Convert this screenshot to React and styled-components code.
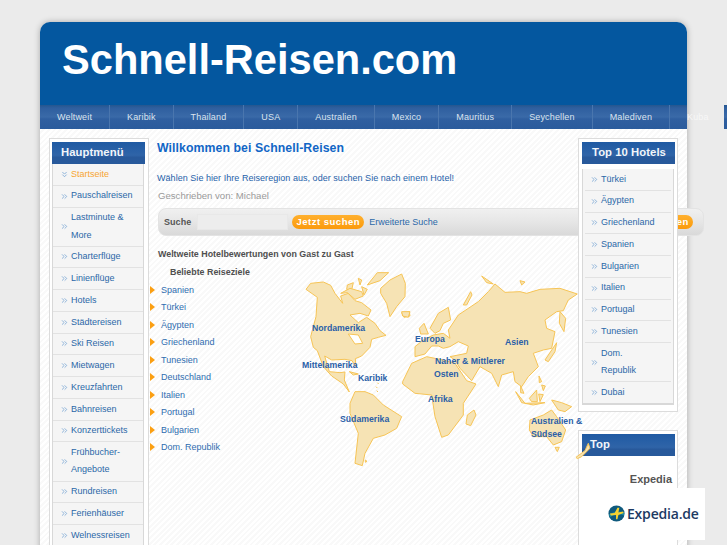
import React from 'react';
import styled, { createGlobalStyle } from 'styled-components';
import { ChevronsRight, ChevronsDown } from 'lucide-react';

const GlobalStyle = createGlobalStyle`
  html, body {
    margin: 0;
    overflow-x: hidden;
    background: #ebebeb;
    font-family: "Liberation Sans", Arial, sans-serif;
  }
`;

const Wrapper = styled.div`
  width: 647px;
  margin: 22px auto 0;
  border-radius: 10px 10px 0 0;
  box-shadow: 0 0 6px rgba(0, 0, 0, 0.28);
`;

const Header = styled.header`
  height: 83px;
  box-sizing: border-box;
  padding: 13px 0 0 22px;
  background: #04579f;
  border-radius: 10px 10px 0 0;
`;

const Logo = styled.h1`
  margin: 0;
  color: #fff;
  font-size: 41.6px;
  line-height: 50px;
  font-weight: 700;
  white-space: nowrap;
`;

const navBg = `linear-gradient(#24568f 0, #2f5f9f 3px, #3a6aa8 12px, #2f5fa0 14px, #2a5b9c 100%)`;

const Nav = styled.nav`
  display: flex;
  height: 24px;
  background: ${navBg};
`;

const NavItem = styled.a`
  flex: none;
  padding: 0 ${(p) => p.$right || 17}px 0 17px;
  border-right: ${(p) => (p.$last ? 'none' : '1px solid #4a76ae')};
  color: ${(p) => (p.$last ? '#f7f7f7' : '#dbe4ef')};
  font-size: 9px;
  line-height: 25px;
  letter-spacing: 0.15px;
`;

const NextBlock = styled.div`
  flex: none;
  width: 30px;
  background: ${navBg};
`;

const Content = styled.div`
  display: flex;
  align-items: flex-start;
  height: 440px;
  box-sizing: border-box;
  padding: 9px 9px 0;
  background: repeating-linear-gradient(135deg, #fff 0 2px, #f9f9f9 2px 4px);
`;

const SideBox = styled.aside`
  flex: none;
  position: relative;
  width: 100px;
  box-sizing: border-box;
  padding: 3px 2px ${(p) => p.$bottom || 4}px ${(p) => p.$left || 2}px;
  background: #fff;
  border: 1px solid #dcdcdc;
  z-index: 2;
`;

const RightColumn = styled.div`
  flex: none;
  display: flex;
  flex-direction: column;
  gap: 18px;
  margin-left: auto;
  position: relative;
  z-index: 2;
`;

const BoxTitle = styled.h3`
  margin: 0 0 ${(p) => p.$gap || 0}px;
  height: 22px;
  width: 93px;
  box-sizing: border-box;
  padding-left: ${(p) => p.$indent || 9}px;
  background: linear-gradient(#1f5aa3 0, #2f64a8 60%, #28599b 70%, #27599b 100%);
  color: #f2f5f9;
  font-size: 11.3px;
  line-height: 21px;
  font-weight: 700;
  letter-spacing: 0.05px;
  text-align: ${(p) => p.$align || 'left'};
  white-space: nowrap;
`;

const MenuList = styled.ul`
  margin: 0;
  padding: 0 ${(p) => p.$pad || 0}px;
  width: ${(p) => p.$width}px;
  box-sizing: border-box;
  list-style: none;
  background: #f5f5f5;
  border: 1px solid #d8d8d8;
  border-width: 0 1px 2px;
`;

const MenuItem = styled.li`
  display: flex;
  align-items: center;
  box-sizing: border-box;
  padding: 1.6px ${(p) => p.$right}px 1.75px ${(p) => p.$left}px;
  border-bottom: 1px solid #e2e2e2;
  color: ${(p) => (p.$active ? '#f7a531' : '#2b68a8')};
  font-size: 9px;
  line-height: 17.4px;

  &:last-child {
    border-bottom: none;
  }

  svg {
    flex: none;
    margin-right: 2px;
    color: #6d9fd0;
  }
`;

const Main = styled.main`
  flex: 1;
  min-width: 0;
  margin-left: 8px;
  position: relative;
`;

const Heading = styled.h2`
  margin: 2px 0 0;
  color: #1166c6;
  font-size: 12.3px;
  line-height: 16px;
  font-weight: 700;
  letter-spacing: 0.07px;
  white-space: nowrap;
`;

const Intro = styled.p`
  margin: 16px 0 0;
  color: #1f62aa;
  font-size: 9px;
  line-height: 12px;
  letter-spacing: 0.04px;
  white-space: nowrap;
`;

const Byline = styled.p`
  margin: 6px 0 0 1px;
  color: #9a9a9a;
  font-size: 9.6px;
  line-height: 12px;
`;

const SearchBar = styled.div`
  display: flex;
  align-items: center;
  width: 546px;
  height: 28px;
  box-sizing: border-box;
  margin: 6px 0 0 1px;
  padding: 0 10px 0 5px;
  border: 1px solid #e3e3e3;
  border-radius: 8px;
  background: linear-gradient(#f0f0f0, #e6e6e6 50%, #d9d9d9);
`;

const SearchLabel = styled.span`
  color: #555;
  font-size: 9px;
  font-weight: 700;
  letter-spacing: 0.05px;
`;

const SearchInput = styled.div`
  width: 89px;
  height: 14px;
  margin: 0 4px 0 6px;
  border: 1px solid #e8e8e8;
  background: #ededed;
`;

const SearchButton = styled.span`
  flex: none;
  width: 72px;
  height: 14px;
  margin-left: ${(p) => (p.$end ? 'auto' : '0')};
  border-radius: 7px;
  background: linear-gradient(#ffb02e, #fb9a0c);
  color: #fff;
  font-size: 9.5px;
  line-height: 14px;
  font-weight: 700;
  letter-spacing: 0.5px;
  text-align: center;
  white-space: nowrap;
`;

const SearchLink = styled.a`
  margin-left: 5px;
  color: #2b68a8;
  font-size: 9px;
  white-space: nowrap;
`;

const SubHeading = styled.p`
  margin: ${(p) => p.$top}px 0 0 ${(p) => p.$left}px;
  color: #4f4f4f;
  font-size: 8.9px;
  line-height: 12px;
  font-weight: 700;
  white-space: nowrap;
`;

const DestinationList = styled.ul`
  margin: 3px 0 0 -7px;
  padding: 0;
  list-style: none;
`;

const Destination = styled.li`
  display: flex;
  align-items: center;
  gap: 6px;
  height: 17.5px;
  color: #2f6db0;
  font-size: 9px;

  &::before {
    content: '';
    border-left: 5px solid #fb9f12;
    border-top: 4px solid transparent;
    border-bottom: 4px solid transparent;
  }
`;

const MapCanvas = styled.div`
  position: absolute;
  left: 133px;
  top: 0;
  width: 300px;
  height: 350px;
  z-index: 3;
  pointer-events: none;

  svg {
    display: block;
    overflow: visible;
  }
`;

const MapLabel = styled.span`
  position: absolute;
  left: ${(p) => p.$x}px;
  top: ${(p) => p.$y}px;
  color: #2a5fa8;
  font-size: 8.7px;
  line-height: 12px;
  font-weight: 700;
  white-space: nowrap;
`;

const LandGroup = styled.g`
  fill: #f6e3b4;
  stroke: #f6c455;
  stroke-width: 3;
  stroke-linejoin: round;
`;

const AdBrand = styled.p`
  margin: 16px 3px 0 0;
  color: #555;
  font-size: 11px;
  line-height: 14px;
  font-weight: 700;
  text-align: right;
`;

const TopBox = styled(SideBox)`
  height: 120px;
  border-bottom: none;
`;

const AdCard = styled.div`
  position: absolute;
  left: 26px;
  top: 57px;
  width: 97px;
  height: 52px;
  padding-left: 3px;
  display: flex;
  align-items: center;
  gap: 2px;
  background: #fff;
`;

const AdText = styled.span`
  color: #1d3a63;
  font-family: "Open Sans", sans-serif;
  font-size: 14px;
  font-weight: 600;
  letter-spacing: -0.2px;
`;

const navItems = ['Weltweit', 'Karibik', 'Thailand', 'USA', 'Australien', 'Mexico', 'Mauritius', 'Seychellen', 'Malediven'];

const leftMenu = [
  'Pauschalreisen', 'Lastminute & More', 'Charterflüge', 'Linienflüge', 'Hotels', 'Städtereisen', 'Ski Reisen',
  'Mietwagen', 'Kreuzfahrten', 'Bahnreisen', 'Konzerttickets', 'Frühbucher-Angebote', 'Rundreisen', 'Ferienhäuser', 'Welnessreisen',
];

const topHotels = ['Türkei', 'Ägypten', 'Griechenland', 'Spanien', 'Bulgarien', 'Italien', 'Portugal', 'Tunesien', 'Dom. Republik', 'Dubai'];

const destinations = ['Spanien', 'Türkei', 'Ägypten', 'Griechenland', 'Tunesien', 'Deutschland', 'Italien', 'Portugal', 'Bulgarien', 'Dom. Republik'];

// x, y relative to the map canvas, whose corner is at 290,138 on the page
const mapLabels = [
  ['Nordamerika', 22, 184],
  ['Mittelamerika', 12, 221],
  ['Karibik', 68, 234],
  ['Südamerika', 50, 275],
  ['Europa', 125, 195],
  ['Naher & Mittlerer', 145, 217],
  ['Osten', 144, 230],
  ['Afrika', 138, 255],
  ['Asien', 215, 198],
  ['Australien &', 241, 277],
  ['Südsee', 241, 290],
];

// coordinates are from the 3x zoom of the map, hence the scale on the groups
const WorldMap = () => (
  <svg width="300" height="350" viewBox="0 0 300 350">
    <LandGroup>
      <g transform="translate(0 122) scale(0.3333)">
        {/* North and Central America */}
        <path d="M48,88 L62,70 L100,66 L122,76 L135,100 L158,130 L152,108 L175,100 L195,122 L215,128 L243,150 L235,168 L210,160 L180,165 L205,188 L230,172 L255,190 L270,212 L288,226 L265,232 L245,238 L240,262 L215,288 L196,296 L198,322 L186,302 L165,298 L125,300 L104,288 L118,335 L150,338 L165,336 L163,360 L178,396 L160,372 L125,348 L100,320 L82,272 L70,262 L62,230 L78,170 L82,112 Z" />
        {/* Greenland and arctic islands */}
        <path d="M272,85 L300,60 L335,42 L346,70 L345,110 L320,140 L300,170 L290,130 L272,100 Z" />
        <path d="M232,75 L262,38 L296,38 L270,62 Z" />
        <path d="M335,158 L358,155 L360,168 L342,172 Z" />
        <path d="M172,75 L190,68 L185,90 L170,88 Z" />
        <path d="M205,55 L215,60 L210,75 Z" />
        <path d="M152,100 L180,85 L215,95 L220,108 L195,118 L172,98 Z" />
        <path d="M215,80 L232,88 L222,105 Z" />
        <path d="M175,222 L205,225 L218,250 L195,252 Z" fill="#fff" />
        <path d="M178,335 L205,342 L190,345 Z" />
        <path d="M262,368 L266,372 M258,380 L262,384 M260,392 L264,396" />
        {/* South America */}
        <path d="M180,430 L195,395 L225,395 L250,405 L280,435 L335,470 L320,505 L285,525 L250,535 L225,580 L217,617 L195,610 L205,520 L180,460 Z" />
        <path d="M226,600 L231,604 L226,607 Z" />
      </g>
      <g transform="translate(110 122) scale(0.3333)">
        {/* Africa */}
        <path d="M8,365 L35,310 L80,290 L130,300 L165,310 L200,362 L228,372 L190,430 L190,465 L145,525 L125,532 L105,470 L95,405 L45,400 L8,372 Z" />
        <path d="M202,465 L222,450 L228,465 L212,497 L198,492 Z" />
        {/* Eurasia */}
        <path d="M145,210 L175,165 L235,125 L265,95 L285,72 L315,97 L360,95 L380,100 L420,88 L480,85 L532,102 L505,120 L490,152 L470,155 L435,180 L440,205 L465,215 L455,265 L430,270 L400,280 L415,320 L385,350 L365,380 L345,365 L340,335 L305,345 L295,380 L275,340 L240,320 L215,362 L180,325 L165,300 L150,290 L200,280 L205,258 L175,245 L150,260 L130,265 L115,258 L95,258 L75,282 L45,290 L45,260 L70,240 L100,225 L130,220 L150,235 Z" />
        <path d="M90,205 L115,160 L145,142 L152,180 L130,190 L120,212 L105,220 Z" />
        <path d="M58,205 L72,190 L85,222 L62,222 Z" />
        <path d="M190,135 L212,95 L216,105 L200,135 Z" />
        <path d="M245,48 L280,72 L260,68 Z" />
        <path d="M360,62 L375,66 L365,75 Z" />
        <path d="M5,155 L30,155 L25,172 L8,168 Z" />
        <path d="M435,300 L470,248 L465,275 L445,305 Z" />
        <path d="M480,155 L497,175 L492,215 L478,190 Z" />
        {/* Islands and Oceania */}
        <path d="M347,395 L375,430 L365,428 Z" />
        <path d="M362,378 L372,400 L362,398 Z" />
        <path d="M388,415 L410,390 L412,425 L395,425 Z" />
        <path d="M375,430 L435,428 L400,435 Z" />
        <path d="M417,348 L425,365 L418,368 Z" />
        <path d="M425,375 L436,378 L430,392 Z" />
        <path d="M416,402 L430,404 L420,425 Z" />
        <path d="M455,420 L485,428 L515,440 L495,455 L475,450 Z" />
        <path d="M390,480 L430,465 L455,450 L470,470 L497,510 L485,545 L460,555 L440,530 L400,530 L388,510 Z" />
        <path d="M465,562 L478,562 L472,575 Z" />
        <path d="M528,592 L555,572 L565,550 L570,565 L545,590 L532,596 Z" />
      </g>
    </LandGroup>
  </svg>
);

const App = () => (
  <>
    <GlobalStyle />
    <Wrapper>
      <Header>
        <Logo>Schnell-Reisen.com</Logo>
      </Header>
      <Nav>
        {navItems.map((item) => (
          <NavItem key={item}>{item}</NavItem>
        ))}
        <NavItem $last $right={15}>Kuba</NavItem>
        <NextBlock />
      </Nav>
      <Content>
        <SideBox>
          <BoxTitle>Hauptmenü</BoxTitle>
          <MenuList $width={92}>
            <MenuItem $active $left={7} $right={4}>
              <ChevronsDown size={9} />
              Startseite
            </MenuItem>
            {leftMenu.map((item) => (
              <MenuItem key={item} $left={7} $right={4}>
                <ChevronsRight size={9} />
                <span>{item}</span>
              </MenuItem>
            ))}
          </MenuList>
        </SideBox>
        <Main>
          <Heading>Willkommen bei Schnell-Reisen</Heading>
          <Intro>Wählen Sie hier Ihre Reiseregion aus, oder suchen Sie nach einem Hotel!</Intro>
          <Byline>Geschrieben von: Michael</Byline>
          <SearchBar>
            <SearchLabel>Suche</SearchLabel>
            <SearchInput />
            <SearchButton>Jetzt suchen</SearchButton>
            <SearchLink>Erweiterte Suche</SearchLink>
            <SearchButton $end>Jetzt suchen</SearchButton>
          </SearchBar>
          <SubHeading $top={12} $left={1}>Weltweite Hotelbewertungen von Gast zu Gast</SubHeading>
          <SubHeading $top={6} $left={13}>Beliebte Reiseziele</SubHeading>
          <DestinationList>
            {destinations.map((item) => (
              <Destination key={item}>{item}</Destination>
            ))}
          </DestinationList>
          <MapCanvas>
            <WorldMap />
            {mapLabels.map(([text, x, y]) => (
              <MapLabel key={text} $x={x} $y={y}>{text}</MapLabel>
            ))}
          </MapCanvas>
        </Main>
        <RightColumn>
          <SideBox $left={3} $bottom={6}>
            <BoxTitle $gap={5} $align="center" $indent={1}>Top 10 Hotels</BoxTitle>
            <MenuList $width={92} $pad={2}>
              {topHotels.map((item) => (
                <MenuItem key={item} $left={5} $right={14}>
                  <ChevronsRight size={9} />
                  <span>{item}</span>
                </MenuItem>
              ))}
            </MenuList>
          </SideBox>
          <TopBox $left={3}>
            <BoxTitle $indent={8}>Top</BoxTitle>
            <AdBrand>Expedia</AdBrand>
            <AdCard>
              <svg width="17" height="17" viewBox="0 0 18 18">
                <circle cx="9" cy="9" r="8.5" fill="#0f5a7d" />
                <path d="M1,10 Q9,5 17,8 L17,11 Q9,8 2,13 Z" fill="#1d8aa0" />
                <path d="M2,9 L7,8.5 L10,3 L12,3 L11,8 L16,7 L16.5,8.5 L11,10.5 L10,15 L8.5,15 L8.5,10.5 L3,11 Z" fill="#f5d22f" />
              </svg>
              <AdText>Expedia.de</AdText>
            </AdCard>
          </TopBox>
        </RightColumn>
      </Content>
    </Wrapper>
  </>
);

export default App;
